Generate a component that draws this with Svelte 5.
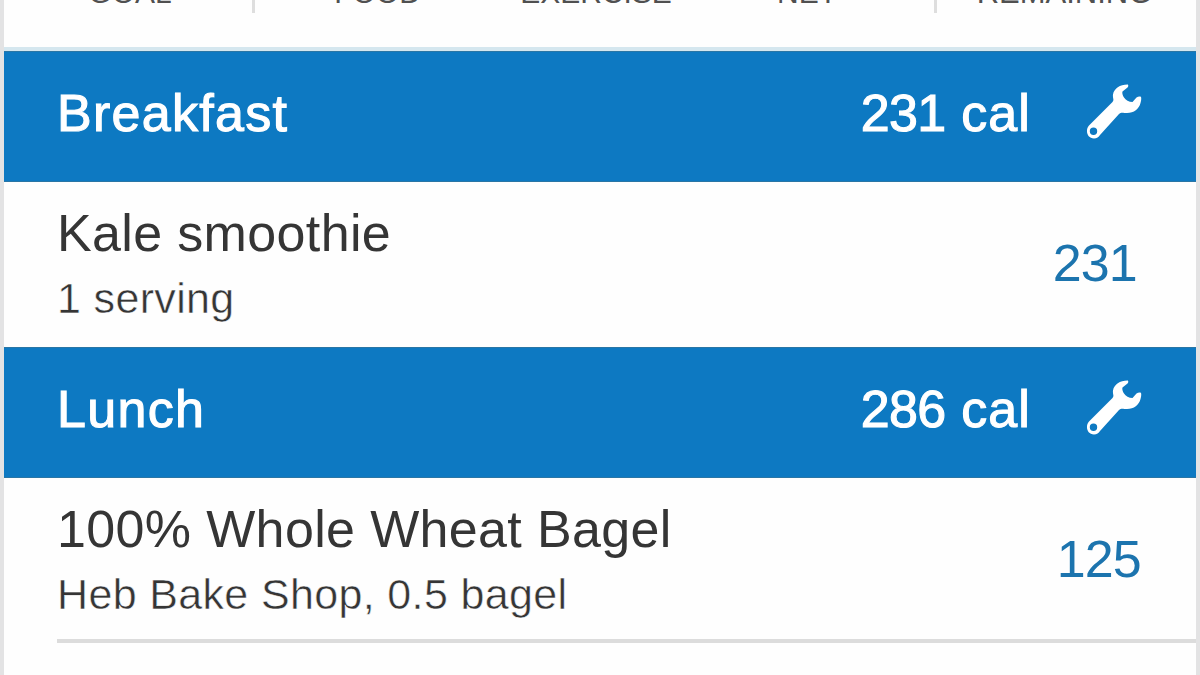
<script>
	const totals = ['Goal', 'Food', 'Exercise', 'Net', 'Remaining'];

	const meals = [
		{
			name: 'Breakfast',
			calories: 231,
			foods: [{ title: 'Kale smoothie', detail: '1 serving', calories: 231 }]
		},
		{
			name: 'Lunch',
			calories: 286,
			more: true,
			foods: [
				{ title: '100% Whole Wheat Bagel', detail: 'Heb Bake Shop, 0.5 bagel', calories: 125 }
			]
		}
	];
</script>

<main class="diary">
	<header class="totals">
		{#each totals as label}
			<div class="total total-{label.toLowerCase()}"><span>{label}</span></div>
		{/each}
	</header>

	{#each meals as meal}
		<section class="meal">
			<div class="meal-header">
				<h2>{meal.name}</h2>
				<span class="meal-calories"><span class="amount">{meal.calories}</span> cal</span>
				<button aria-label="{meal.name} tools">
					<svg viewBox="0 0 56 56" width="56" height="56">
						<path
							fill="#fff"
							fill-rule="evenodd"
							d="M41.5 0.5C34 0.5 28 4.5 27 10.5C26.5 14 28.5 16 26.5 18L3 41.5C-1 46 1 54.5 8 54.5C11 54.5 12.5 53 14 51L33 30C35 28 37 29 41 29C48 29 53 25 54.5 19C55.2 16.5 55.5 14.5 55 13C54.3 12.3 52 12.5 50.5 13.5L46.5 18C43 18 39.500 16 38 13.500C36.500 11 36 9 36.500 7.500L41.500 3.500C42.500 2.500 42.500 0.500 41.500 0.500ZM7.500 43.500a3.700 3.700 0 1 1 0 7.400a3.700 3.700 0 1 1 0-7.400Z"
						/>
					</svg>
				</button>
			</div>
			{#each meal.foods as food}
				<article class="food" class:divided={meal.more}>
					<div>
						<h3>{food.title}</h3>
						<p>{food.detail}</p>
					</div>
					<span class="food-calories" class:wide={food.calories === 125}>{food.calories}</span>
				</article>
			{/each}
		</section>
	{/each}
</main>

<style>
	:global(body) {
		overflow: hidden;
	}

	.diary {
		box-sizing: border-box;
		width: 1200px;
		height: 675px;
		overflow: hidden;
		border: solid #e3e3e4;
		border-width: 0 4px;
		background: #fefefe;
		font-family: 'Liberation Sans', Arial, sans-serif;
		color: #353535;
	}

	.totals {
		display: grid;
		grid-template-columns: 251px 257px 168px 257px 1fr;
		box-sizing: border-box;
		height: 51px;
		border-bottom: 4px solid #d5e7ef;
	}

	.total {
		box-sizing: border-box;
		height: 13px;
		display: flex;
		align-items: flex-end;
		justify-content: center;
		font-size: 30px;
		line-height: 30px;
		text-transform: uppercase;
		color: #505050;

		& span {
			margin-bottom: 5px;
		}
	}

	.total-goal,
	.total-net {
		border-right: 3px solid #dedede;
	}

	.total-goal {
		padding-left: 4px;
	}

	.total-food {
		padding-right: 12px;
	}

	.total-remaining {
		padding-right: 4px;
		font-size: 31px;
	}

	.meal-header {
		box-sizing: border-box;
		display: flex;
		align-items: center;
		height: 131px;
		padding: 0 54px 7px 53px;
		border-top: 1px solid #2a76a5;
		border-bottom: 1px solid #2a76a5;
		background: #0d79c2;
		color: #fff;
		font-size: 52px;
		letter-spacing: 1.3px;
		-webkit-text-stroke: 1.1px #fff;

		& h2 {
			flex: 1;
			margin: 0;
			font: inherit;
		}

		& button {
			margin: 0 0 0 56px;
			padding: 0;
			border: 0;
			background: none;
			line-height: 0;
		}

		& svg {
			position: relative;
			top: -1px;
		}
	}

	.meal-calories {
		margin-right: -1px;
		letter-spacing: 1.1px;
	}

	.amount {
		letter-spacing: -0.6px;
	}

	.food {
		box-sizing: border-box;
		display: flex;
		align-items: flex-start;
		justify-content: space-between;
		height: 165px;
		margin-left: 53px;
		padding: 19px 59px 0 0;

		& h3 {
			margin: 0;
			font-size: 52px;
			font-weight: 400;
			line-height: 64px;
			letter-spacing: 0.35px;
		}

		& p {
			margin: 0;
			font-size: 43px;
			line-height: 66px;
			letter-spacing: 0.35px;
			-webkit-text-stroke: 0.5px #fefefe;
		}
	}

	.divided {
		border-bottom: 4px solid #dcdcdc;
	}

	.food-calories {
		color: #1c74ae;
		font-size: 52px;
		line-height: 124px;
		letter-spacing: -0.8px;
	}

	.food-calories.wide {
		margin-right: -4px;
	}
</style>
